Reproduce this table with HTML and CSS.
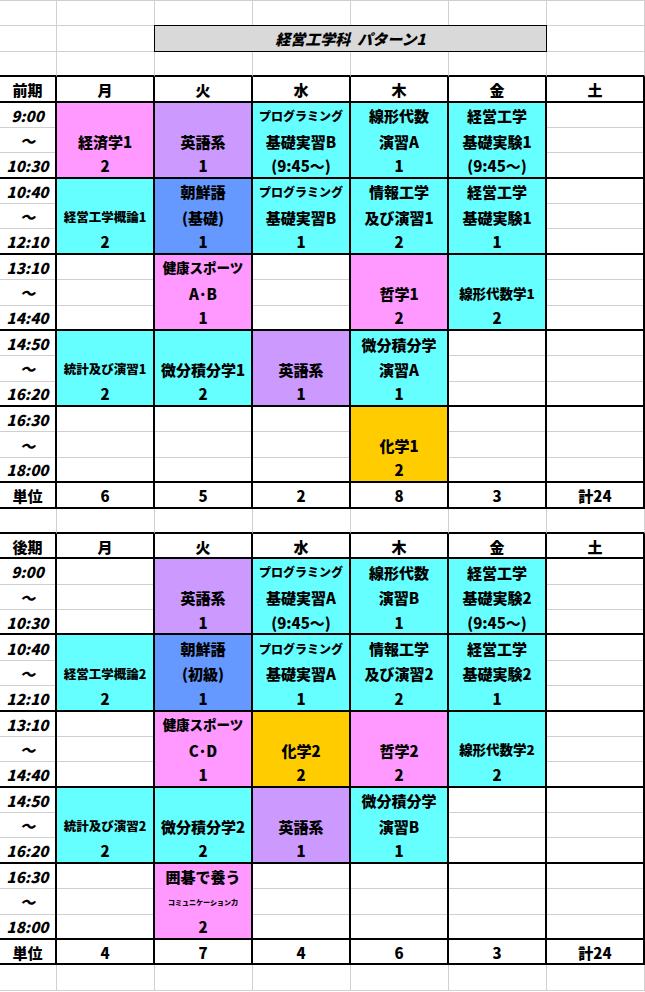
FILE: index.html
```html
<!DOCTYPE html>
<html lang="ja">
<head>
<meta charset="utf-8">
<title>経営工学科 パターン1</title>
<link rel="stylesheet" href="styles.css">
</head>
<body>
<div class="sheet">
  <!-- row 1 -->
  <div class="c"></div><div class="c"></div><div class="c"></div><div class="c"></div><div class="c"></div><div class="c"></div><div class="c"></div>
  <!-- row 2: title -->
  <div class="c"></div><div class="c"></div>
  <div class="title">経営工学科&nbsp;&nbsp;パターン1</div>
  <div class="c"></div>
  <!-- row 3 -->
  <div class="c edge"></div><div class="c edge"></div><div class="c edge"></div><div class="c edge"></div><div class="c edge"></div><div class="c edge"></div><div class="c edge"></div>

  <!-- 前期 -->
  <div class="h">前期</div><div class="h">月</div><div class="h">火</div><div class="h">水</div><div class="h">木</div><div class="h">金</div><div class="h">土</div>

  <div class="p w t"><span>9:00</span><span>～</span><span>10:30</span></div>
  <div class="p pink"><span></span><span>経済学1</span><span>2</span></div>
  <div class="p purple"><span></span><span>英語系</span><span>1</span></div>
  <div class="p cyan"><span class="s12">プログラミング</span><span>基礎実習B</span><span>(9:45～)</span></div>
  <div class="p cyan"><span>線形代数</span><span>演習A</span><span>1</span></div>
  <div class="p cyan"><span>経営工学</span><span>基礎実験1</span><span>(9:45～)</span></div>
  <div class="p w"><span></span><span></span><span></span></div>

  <div class="p w t"><span>10:40</span><span>～</span><span>12:10</span></div>
  <div class="p cyan"><span></span><span class="s13">経営工学概論1</span><span>2</span></div>
  <div class="p blue"><span>朝鮮語</span><span>(基礎)</span><span>1</span></div>
  <div class="p cyan"><span class="s12">プログラミング</span><span>基礎実習B</span><span>1</span></div>
  <div class="p cyan"><span>情報工学</span><span>及び演習1</span><span>2</span></div>
  <div class="p cyan"><span>経営工学</span><span>基礎実験1</span><span>1</span></div>
  <div class="p w"><span></span><span></span><span></span></div>

  <div class="p w t"><span>13:10</span><span>～</span><span>14:40</span></div>
  <div class="p w"><span></span><span></span><span></span></div>
  <div class="p pink"><span class="s14">健康スポーツ</span><span>A･B</span><span>1</span></div>
  <div class="p w"><span></span><span></span><span></span></div>
  <div class="p pink"><span></span><span>哲学1</span><span>2</span></div>
  <div class="p cyan"><span></span><span class="s14">線形代数学1</span><span>2</span></div>
  <div class="p w"><span></span><span></span><span></span></div>

  <div class="p w t"><span>14:50</span><span>～</span><span>16:20</span></div>
  <div class="p cyan"><span></span><span class="s13">統計及び演習1</span><span>2</span></div>
  <div class="p cyan"><span></span><span>微分積分学1</span><span>2</span></div>
  <div class="p purple"><span></span><span>英語系</span><span>1</span></div>
  <div class="p cyan"><span>微分積分学</span><span>演習A</span><span>1</span></div>
  <div class="p w"><span></span><span></span><span></span></div>
  <div class="p w"><span></span><span></span><span></span></div>

  <div class="p w t"><span>16:30</span><span>～</span><span>18:00</span></div>
  <div class="p w"><span></span><span></span><span></span></div>
  <div class="p w"><span></span><span></span><span></span></div>
  <div class="p w"><span></span><span></span><span></span></div>
  <div class="p gold"><span></span><span>化学1</span><span>2</span></div>
  <div class="p w"><span></span><span></span><span></span></div>
  <div class="p w"><span></span><span></span><span></span></div>

  <div class="h">単位</div><div class="h">6</div><div class="h">5</div><div class="h">2</div><div class="h">8</div><div class="h">3</div><div class="h">計24</div>

  <!-- spacer -->
  <div class="c edge"></div><div class="c edge"></div><div class="c edge"></div><div class="c edge"></div><div class="c edge"></div><div class="c edge"></div><div class="c edge"></div>

  <!-- 後期 -->
  <div class="h">後期</div><div class="h">月</div><div class="h">火</div><div class="h">水</div><div class="h">木</div><div class="h">金</div><div class="h">土</div>

  <div class="p w t"><span>9:00</span><span>～</span><span>10:30</span></div>
  <div class="p w"><span></span><span></span><span></span></div>
  <div class="p purple"><span></span><span>英語系</span><span>1</span></div>
  <div class="p cyan"><span class="s12">プログラミング</span><span>基礎実習A</span><span>(9:45～)</span></div>
  <div class="p cyan"><span>線形代数</span><span>演習B</span><span>1</span></div>
  <div class="p cyan"><span>経営工学</span><span>基礎実験2</span><span>(9:45～)</span></div>
  <div class="p w"><span></span><span></span><span></span></div>

  <div class="p w t"><span>10:40</span><span>～</span><span>12:10</span></div>
  <div class="p cyan"><span></span><span class="s13">経営工学概論2</span><span>2</span></div>
  <div class="p blue"><span>朝鮮語</span><span>(初級)</span><span>1</span></div>
  <div class="p cyan"><span class="s12">プログラミング</span><span>基礎実習A</span><span>1</span></div>
  <div class="p cyan"><span>情報工学</span><span>及び演習2</span><span>2</span></div>
  <div class="p cyan"><span>経営工学</span><span>基礎実験2</span><span>1</span></div>
  <div class="p w"><span></span><span></span><span></span></div>

  <div class="p w t"><span>13:10</span><span>～</span><span>14:40</span></div>
  <div class="p w"><span></span><span></span><span></span></div>
  <div class="p pink"><span class="s14">健康スポーツ</span><span>C･D</span><span>1</span></div>
  <div class="p gold"><span></span><span>化学2</span><span>2</span></div>
  <div class="p pink"><span></span><span>哲学2</span><span>2</span></div>
  <div class="p cyan"><span></span><span class="s14">線形代数学2</span><span>2</span></div>
  <div class="p w"><span></span><span></span><span></span></div>

  <div class="p w t"><span>14:50</span><span>～</span><span>16:20</span></div>
  <div class="p cyan"><span></span><span class="s13">統計及び演習2</span><span>2</span></div>
  <div class="p cyan"><span></span><span>微分積分学2</span><span>2</span></div>
  <div class="p purple"><span></span><span>英語系</span><span>1</span></div>
  <div class="p cyan"><span>微分積分学</span><span>演習B</span><span>1</span></div>
  <div class="p w"><span></span><span></span><span></span></div>
  <div class="p w"><span></span><span></span><span></span></div>

  <div class="p w t"><span>16:30</span><span>～</span><span>18:00</span></div>
  <div class="p w"><span></span><span></span><span></span></div>
  <div class="p pink"><span>囲碁で養う</span><span class="tiny">コミュニケーション力</span><span>2</span></div>
  <div class="p w"><span></span><span></span><span></span></div>
  <div class="p w"><span></span><span></span><span></span></div>
  <div class="p w"><span></span><span></span><span></span></div>
  <div class="p w"><span></span><span></span><span></span></div>

  <div class="h">単位</div><div class="h">4</div><div class="h">7</div><div class="h">4</div><div class="h">6</div><div class="h">3</div><div class="h">計24</div>

  <!-- last row -->
  <div class="c"></div><div class="c"></div><div class="c"></div><div class="c"></div><div class="c"></div><div class="c"></div><div class="c"></div>
</div>
</body>
</html>
```

FILE: styles.css
```css
* {
  box-sizing: border-box;
  margin: 0;
  padding: 0;
}

body {
  margin: 0;
  background: #ffffff;
  color: #000000;
  font-family: "Noto Sans CJK JP", "Noto Sans", sans-serif;
  font-weight: 900;
  font-size: 15px;
}

.sheet {
  display: grid;
  grid-template-columns: 57px repeat(6, 98px);
  grid-template-rows: repeat(39, 25.385px);
  width: 645px;
  border-top: 1px solid #d0d0d0;
}

.c {
  border-right: 1px solid #d0d0d0;
  border-bottom: 1px solid #d0d0d0;
}

.c.edge {
  border-bottom: 2px solid #000000;
}

.title {
  grid-column: span 4;
  margin: -1px 0 0 -1px;
  border: 1px solid #000000;
  background: #d9d9d9;
  font-style: italic;
  display: flex;
  align-items: center;
  justify-content: center;
  line-height: 1;
}

.h {
  border-right: 2px solid #000000;
  border-bottom: 2px solid #000000;
  display: flex;
  align-items: center;
  justify-content: center;
  line-height: 1;
  padding-top: 1px;
}

.p {
  grid-row: span 3;
  border-right: 2px solid #000000;
  border-bottom: 2px solid #000000;
  display: flex;
  flex-direction: column;
}

.p > span {
  flex: none;
  height: 25.385px;
  display: flex;
  align-items: center;
  justify-content: center;
  line-height: 1;
  white-space: nowrap;
  padding-top: 1px;
}

.p > span:last-child {
  flex: 1;
  height: auto;
}

.p.w > span:not(:last-child) {
  border-bottom: 1px solid #d0d0d0;
}

.t > span {
  font-style: italic;
}

.s12 { font-size: 12px; }
.s13 { font-size: 12.5px; }
.s14 { font-size: 13.5px; }
.tiny { font-size: 7px; }

.pink { background: #ff99ff; }
.purple { background: #cc99ff; }
.cyan { background: #66ffff; }
.blue { background: #6699ff; }
.gold { background: #ffcc00; }
```
